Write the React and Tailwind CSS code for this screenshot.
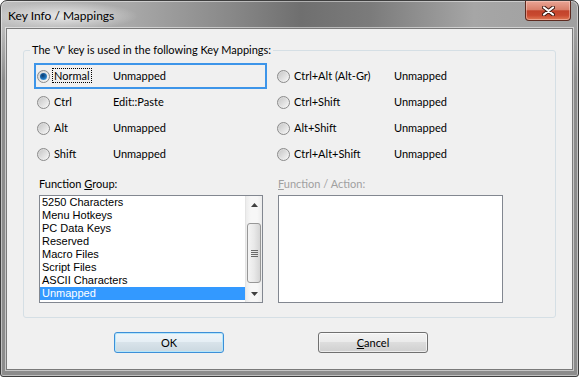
import React from 'react';

const groups = [
  '5250 Characters',
  'Menu Hotkeys',
  'PC Data Keys',
  'Reserved',
  'Macro Files',
  'Script Files',
  'ASCII Characters',
  'Unmapped',
];

const rows = [
  { left: 'Normal', leftVal: 'Unmapped', right: 'Ctrl+Alt (Alt-Gr)', rightVal: 'Unmapped' },
  { left: 'Ctrl', leftVal: 'Edit::Paste', right: 'Ctrl+Shift', rightVal: 'Unmapped' },
  { left: 'Alt', leftVal: 'Unmapped', right: 'Alt+Shift', rightVal: 'Unmapped' },
  { left: 'Shift', leftVal: 'Unmapped', right: 'Ctrl+Alt+Shift', rightVal: 'Unmapped' },
];

function Radio({ checked }) {
  return (
    <span className="flex h-[13px] w-[13px] shrink-0 items-center justify-center rounded-full border border-[#8a8a8a] bg-[linear-gradient(135deg,#d2d2d2,#f8f8f8)]">
      {checked ? (
        <span className="h-[7px] w-[7px] rounded-full bg-[radial-gradient(circle_at_40%_35%,#0b3a6b,#1f73bd_55%,#6ec6f2)]" />
      ) : (
        <span className="h-[9px] w-[9px] rounded-full bg-[linear-gradient(135deg,#c8c8c8,#f4f4f4)]" />
      )}
    </span>
  );
}

function Arrow({ down }) {
  return (
    <svg width="7" height="4" viewBox="0 0 7 4">
      {down ? <polygon points="0,0 7,0 3.5,4" fill="#404040" /> : <polygon points="0,4 7,4 3.5,0" fill="#404040" />}
    </svg>
  );
}

function Scrollbar() {
  return (
    <div className="flex w-[17px] flex-col border-l border-[#e4e4e4] bg-[linear-gradient(90deg,#ececec,#f7f7f7_30%,#f7f7f7_70%,#ececec)]">
      <div className="flex h-[17px] items-center justify-center">
        <Arrow />
      </div>
      <div className="flex-1">
        <div className="mx-[1px] mt-[10px] flex h-[60px] items-center justify-center rounded-[3px] border border-[#979797] bg-[linear-gradient(90deg,#f4f4f4,#e9e9e9_50%,#d5d5d5)]">
          <div className="flex flex-col gap-[1px]">
            <div className="h-px w-[7px] bg-[#6a6a6a]" />
            <div className="h-px w-[7px] bg-[#6a6a6a]" />
            <div className="h-px w-[7px] bg-[#6a6a6a]" />
            <div className="h-px w-[7px] bg-[#6a6a6a]" />
          </div>
        </div>
      </div>
      <div className="flex h-[17px] items-center justify-center">
        <Arrow down />
      </div>
    </div>
  );
}

function CloseButton() {
  return (
    <div className="absolute right-[7px] top-0 flex h-[20px] w-[46px] items-center justify-center rounded-b-[4px] border border-t-0 border-[#5e2a1f] bg-[linear-gradient(180deg,#e9a595_0%,#d9806b_45%,#c2432b_52%,#c9492f_75%,#e07a56_100%)] shadow-[inset_0_0_0_1px_rgba(255,220,210,0.45)]">
      <svg width="13" height="10" viewBox="0 0 13 10">
        <path d="M2 1.5 L11 8.5 M11 1.5 L2 8.5" stroke="#3b1810" strokeWidth="4" strokeLinecap="round" />
        <path d="M2 1.5 L11 8.5 M11 1.5 L2 8.5" stroke="#ffffff" strokeWidth="2.2" strokeLinecap="round" />
      </svg>
    </div>
  );
}

export default function App() {
  return (
    <div className="h-[377px] w-[579px] bg-white font-['Lato','Liberation_Sans',sans-serif] text-[11px] text-black">
      <div className="relative flex h-[377px] w-[579px] flex-col rounded-t-[7px] rounded-b-[3px] border border-[#3e3e3e] bg-[radial-gradient(ellipse_75px_14px_at_62px_15px,rgba(235,235,235,0.95),rgba(235,235,235,0)),linear-gradient(180deg,rgba(138,138,138,0)_0px,rgba(138,138,138,0)_26px,#8c8c8c_80px),linear-gradient(90deg,#bdbdbd_0%,#a9a9a9_22%,#888888_40%,#6f6f6f_52%,#7b7b7b_64%,#a6a6a6_82%,#a0a0a0_100%)] shadow-[inset_0_0_0_1px_rgba(255,255,255,0.45)]">
        <div className="flex h-[27px] items-center pl-[7px] pt-[2px] text-[12px] leading-[16px]">Key Info / Mappings</div>
        <CloseButton />

        <div className="mx-[5px] flex h-[342px] flex-col border border-[#7a7a7a] bg-[#f0f0f0] shadow-[0_0_0_1px_rgba(255,255,255,0.5)]">
          <fieldset className="ml-[16px] mt-[13px] h-[276px] w-[533px] rounded-[3px] border border-[#d5dfe5]">
            <legend className="ml-[6px] px-[2px] leading-[16px]">The 'V' key is used in the following Key Mappings:</legend>

            <div className="ml-[10px] mt-[5px] flex flex-col">
              {rows.map((r, i) => (
                <div key={r.left} className="flex">
                  <div
                    className={
                      i === 0
                        ? 'flex h-[26px] w-[233px] items-center border-2 border-[#3d95e9] pl-[1px]'
                        : 'flex h-[26px] w-[233px] items-center border-2 border-transparent pl-[1px]'
                    }
                  >
                    <Radio checked={i === 0} />
                    <div className="ml-[2px] w-[61px]">
                      <span
                        className={
                          i === 0
                            ? 'border border-dotted border-black px-[1px] leading-[13px]'
                            : 'border border-transparent px-[1px] leading-[13px]'
                        }
                      >
                        {r.left}
                      </span>
                    </div>
                    <span>{r.leftVal}</span>
                  </div>
                  <div className="ml-[7px] flex h-[26px] w-[250px] items-center border-2 border-transparent pl-[1px]">
                    <Radio />
                    <div className="ml-[2px] w-[102px]">
                      <span className="border border-transparent px-[1px]">{r.right}</span>
                    </div>
                    <span>{r.rightVal}</span>
                  </div>
                </div>
              ))}
            </div>

            <div className="ml-[15px] mt-[9px] flex">
              <div className="flex w-[224px] flex-col">
                <div className="leading-[16px]">
                  Function <span className="underline">G</span>roup:
                </div>
                <div className="mt-[3px] flex h-[108px] w-[224px] border border-[#828790] bg-white">
                  <div className="flex flex-1 flex-col font-['Liberation_Sans',sans-serif] text-[11px]">
                    {groups.map((g) => (
                      <div
                        key={g}
                        className={
                          g === 'Unmapped'
                            ? 'h-[13px] bg-[#3399ff] pl-[2px] leading-[13px] text-white'
                            : 'h-[13px] pl-[2px] leading-[13px] text-black'
                        }
                      >
                        {g}
                      </div>
                    ))}
                  </div>
                  <Scrollbar />
                </div>
              </div>

              <div className="ml-[15px] flex w-[225px] flex-col">
                <div className="leading-[16px] text-[#a0a0a0]">
                  <span className="underline">F</span>unction / Action:
                </div>
                <div className="mt-[3px] h-[108px] w-[225px] border border-[#828790] bg-white" />
              </div>
            </div>
          </fieldset>

          <div className="ml-[107px] mt-[14px] flex">
            <button className="flex h-[21px] w-[110px] items-center justify-center rounded-[3px] border border-[#3c8fd8] bg-[linear-gradient(180deg,#eef5f9_0%,#e6eff5_45%,#d8e3ea_50%,#cbd8e0_100%)] leading-[16px] shadow-[inset_0_0_0_1px_#b5e6fa]">
              OK
            </button>
            <button className="ml-[94px] flex h-[21px] w-[110px] items-center justify-center rounded-[3px] border border-[#707070] bg-[linear-gradient(180deg,#f2f2f2_0%,#ebebeb_45%,#dddddd_50%,#cfcfcf_100%)] leading-[16px] shadow-[inset_0_0_0_1px_rgba(255,255,255,0.6)]">
              <span className="underline">C</span>ancel
            </button>
          </div>
        </div>
      </div>
    </div>
  );
}
